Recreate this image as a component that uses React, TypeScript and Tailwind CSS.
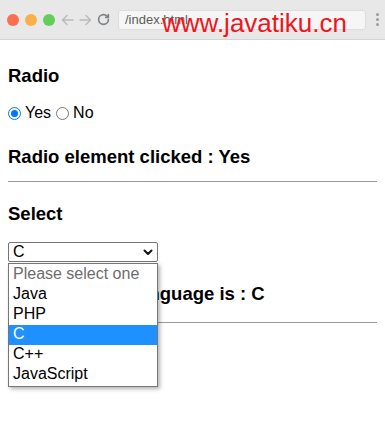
import React from 'react';

const options = ['Java', 'PHP', 'C', 'C++', 'JavaScript'];

const BrowserBar = () => {
  return (
    <div className="relative h-[40px] bg-[#e8e8e8] border-b border-[#d4d4d4] flex items-center">
      {/* Traffic lights */}
      <div className="flex items-center gap-[6px] ml-[7px]">
        <span className="w-[12px] h-[12px] rounded-full bg-[#fb6e4e]" />
        <span className="w-[12px] h-[12px] rounded-full bg-[#fbaf4a]" />
        <span className="w-[12px] h-[12px] rounded-full bg-[#63cd5b]" />
      </div>

      {/* Nav buttons */}
      <svg className="ml-[6px]" width="13" height="12" viewBox="0 0 13 12" fill="none" stroke="#b9b9b9" strokeWidth="1.4" strokeLinecap="round" strokeLinejoin="round">
        <path d="M12 6H1.5M6 1.5L1.5 6L6 10.5" />
      </svg>
      <svg className="ml-[5px]" width="13" height="12" viewBox="0 0 13 12" fill="none" stroke="#b9b9b9" strokeWidth="1.4" strokeLinecap="round" strokeLinejoin="round">
        <path d="M1 6h10.5M7 1.5L11.5 6L7 10.5" />
      </svg>
      <svg className="ml-[5px]" width="13" height="13" viewBox="0 0 24 24" fill="none" stroke="#7e8287" strokeWidth="3" strokeLinecap="round" strokeLinejoin="round">
        <path d="M21 12a9 9 0 1 1-9-9c2.52 0 4.93 1 6.74 2.74L21 8" />
        <path d="M21 3v5h-5" />
      </svg>

      {/* Address bar */}
      <div className="ml-[8px] w-[248px] h-[20px] rounded-[3px] bg-[#f6f6f6] border border-[#dedede] flex items-center pl-[6px] text-[13px] text-[#5b5b5b]">
        /index.html
      </div>

      {/* Menu */}
      <div className="ml-[10px] flex flex-col gap-[2px]">
        <span className="w-[3px] h-[3px] rounded-full bg-[#9b9b9b]" />
        <span className="w-[3px] h-[3px] rounded-full bg-[#9b9b9b]" />
        <span className="w-[3px] h-[3px] rounded-full bg-[#9b9b9b]" />
      </div>

      {/* Watermark */}
      <div className="absolute left-[162px] top-[8px] text-[26px] leading-[30px] text-[#f2141c] whitespace-nowrap">
        www.javatiku.cn
      </div>
    </div>
  );
};

const App = () => {
  return (
    <div className="w-[385px] h-[441px] bg-white overflow-hidden text-black font-['Liberation_Sans',Arial,sans-serif]">
      <BrowserBar />

      <div className="px-2">
        {/* Radio */}
        <h3 className="mt-[25px] text-[18.5px] leading-[21px] font-bold">Radio</h3>
        <div className="mt-[18px] h-[18px] flex items-center text-[16px] leading-[18px]">
          <span className="w-[13px] h-[13px] rounded-full border border-[#0075ff] flex items-center justify-center">
            <span className="w-[7px] h-[7px] rounded-full bg-[#0075ff]" />
          </span>
          <span className="ml-[4px]">Yes</span>
          <span className="ml-[5px] w-[13px] h-[13px] rounded-full border border-[#767676]" />
          <span className="ml-[4px]">No</span>
        </div>
        <h3 className="mt-[24px] text-[18.5px] leading-[21px] font-bold">Radio element clicked : Yes</h3>
        <hr className="mt-[14px] border-t border-[#9b9b9b]" />

        {/* Select */}
        <h3 className="mt-[21px] text-[18.5px] leading-[21px] font-bold">Select</h3>
        <div className="relative mt-[18px] w-[150px]">
          <div className="h-[20px] border border-[#767676] rounded-[2px] flex items-center justify-between pl-[4px] pr-[4px] text-[16px] leading-[18px]">
            <span>C</span>
            <svg width="10" height="7" viewBox="0 0 10 7" fill="none" stroke="#111" strokeWidth="2" strokeLinecap="round" strokeLinejoin="round">
              <path d="M1.5 1.5L5 5L8.5 1.5" />
            </svg>
          </div>

          {/* Open dropdown */}
          <div className="absolute left-0 top-[21px] z-10 w-[150px] bg-white border border-[#767676] py-px shadow-[2px_2px_4px_rgba(0,0,0,0.3)] text-[16px]">
            <div className="h-[20px] leading-[17px] pl-[4px] text-[#6d6d6d]">Please select one</div>
            {options.map((o) => (
              <div
                key={o}
                className={
                  o === 'C'
                    ? 'h-[20px] leading-[17px] pl-[4px] bg-[#1e90ff] text-white'
                    : 'h-[20px] leading-[17px] pl-[4px] text-black'
                }
              >
                {o}
              </div>
            ))}
          </div>
        </div>
        <h3 className="mt-[21px] text-[18.5px] leading-[21px] font-bold whitespace-nowrap">Your selected language is : C</h3>
        <hr className="mt-[18px] border-t border-[#9b9b9b]" />
      </div>
    </div>
  );
};

export default App;
